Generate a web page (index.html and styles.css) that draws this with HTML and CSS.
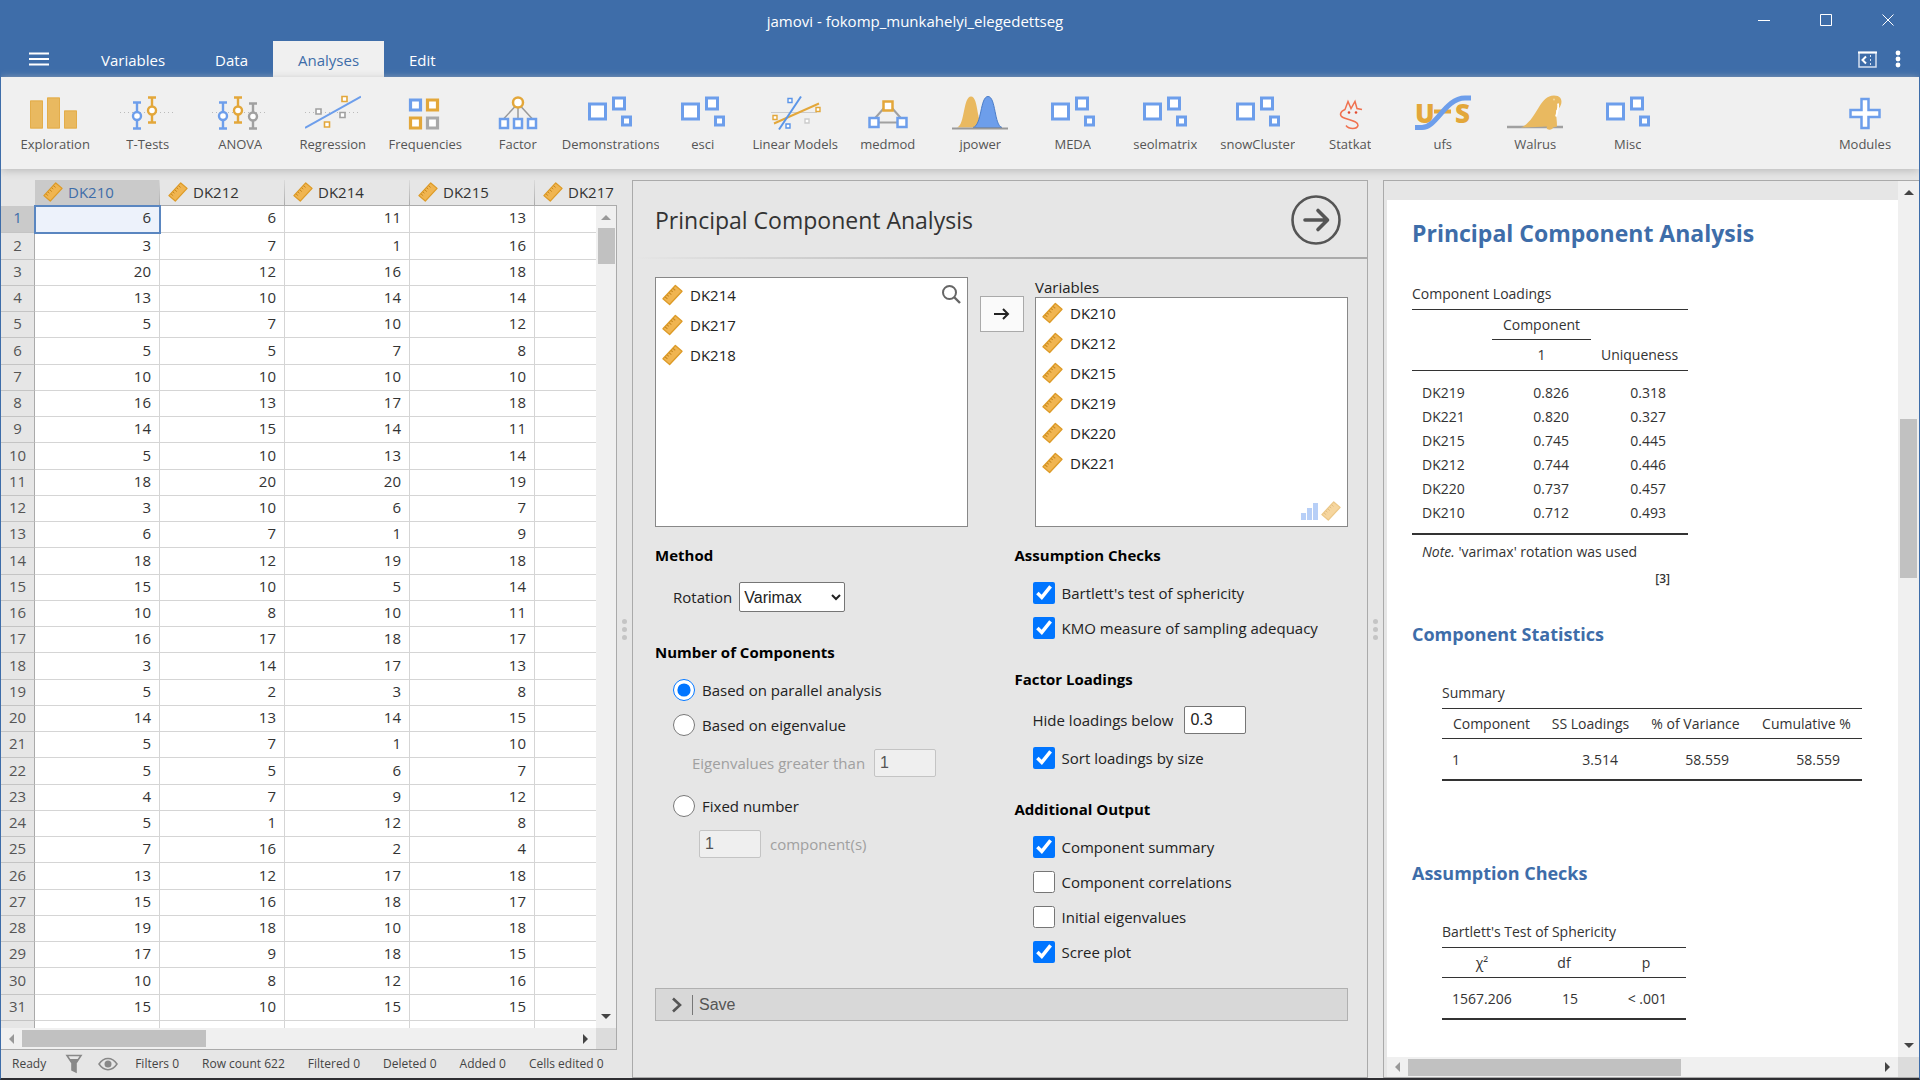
FILE: index.html
```html
<!DOCTYPE html>
<html lang="en">
<head>
<meta charset="utf-8">
<title>jamovi - fokomp_munkahelyi_elegedettseg</title>
<link rel="stylesheet" href="styles.css">
</head>
<body>
<svg class="sprite" aria-hidden="true">
  <symbol id="ruler" viewBox="0 0 22 22">
    <path d="M14 1l7 6-13 14-7-6z" fill="#f0b551" stroke="#dd9b27" stroke-width="1.4" stroke-linejoin="round"/>
    <path d="M11.5 4l2.4 2M9.5 6.3l1.8 1.5M7.4 8.6l2.4 2M5.3 10.9l1.8 1.5M3.3 13.1l2.4 2" stroke="#c98a22" stroke-width="1.1"/>
  </symbol>
  <symbol id="module" viewBox="0 0 56 40">
    <g fill="#fff" stroke="#6d9eeb" stroke-width="3"><path d="M7.5 13.500h16v15h-16zM31.500 7.500h11v11h-11zM40.500 26.500h8v8h-8z"/></g>
  </symbol>
</svg>

<div class="window">
  <header class="titlebar">
    <h1 class="title">jamovi - fokomp_munkahelyi_elegedettseg</h1>
    <div class="winctl">
      <button type="button" aria-label="Minimize"><svg width="14" height="14"><path d="M1 7.500h12" stroke="#fff"/></svg></button>
      <button type="button" aria-label="Maximize"><svg width="14" height="14"><path d="M1.500 1.500h11v11h-11z" stroke="#fff" fill="none"/></svg></button>
      <button type="button" aria-label="Close"><svg width="14" height="14"><path d="M1.500 1.500l11 11M12.500 1.500l-11 11" stroke="#fff"/></svg></button>
    </div>
  </header>

  <nav class="tabs">
    <button type="button" class="burger" aria-label="Menu"><svg width="20" height="14"><path d="M0 1.500h20M0 7h20M0 12.500h20" stroke="#fff" stroke-width="2.200"/></svg></button>
    <button type="button" class="tab">Variables</button>
    <button type="button" class="tab">Data</button>
    <button type="button" class="tab active">Analyses</button>
    <button type="button" class="tab">Edit</button>
    <span class="grow"></span>
    <button type="button" class="tool" aria-label="Toggle panel"><svg width="19" height="17"><path d="M1 1.500h17v14.500h-17z" fill="none" stroke="#d5e0f0" stroke-width="1.500"/><path d="M0 1.500h19" stroke="#fff" stroke-width="2"/><path d="M8 5.500L4.500 9 8 12.500" fill="none" stroke="#fff" stroke-width="2"/><path d="M12.500 4v11" stroke="#d5e0f0" stroke-dasharray="2 2"/></svg></button>
    <button type="button" class="tool" aria-label="More"><svg width="6" height="18" fill="#fff"><circle cx="3" cy="3" r="2.400"/><circle cx="3" cy="9" r="2.400"/><circle cx="3" cy="15" r="2.400"/></svg></button>
  </nav>

  <div class="ribbon">
    <div class="menus">
      <button type="button" class="menu"><svg viewBox="0 0 56 40"><path d="M3 10h13v28H3zM20 7h13v31H20zM37 20h13v18H37z" fill="#e9b960"/><path d="M3.500 10.500h12v27h-12zM20.500 7.500h12v30h-12zM37.500 20.500h12v17h-12z" fill="none" stroke="#e3ad4a"/></svg><span>Exploration</span></button>
      <button type="button" class="menu"><svg viewBox="0 0 56 40"><path d="M0 22h56" stroke="#bbb" stroke-dasharray="1 3"/><g fill="#fff" stroke-width="2.400"><path d="M17 12v26M13 12h8M13 38h8" stroke="#6d9eeb"/><circle cx="17" cy="25.500" r="4" stroke="#6d9eeb"/><path d="M32 7v25M28 7h8M28 32h8" stroke="#e3a73a"/><circle cx="32" cy="20" r="4" stroke="#e3a73a"/></g></svg><span>T-Tests</span></button>
      <button type="button" class="menu"><svg viewBox="0 0 56 40"><path d="M0 22h56" stroke="#bbb" stroke-dasharray="1 3"/><g fill="#fff" stroke-width="2.400"><path d="M11 12v26M7 12h8M7 38h8" stroke="#6d9eeb"/><circle cx="11" cy="25.500" r="4" stroke="#6d9eeb"/><path d="M26 7v25M22 7h8M22 32h8" stroke="#e3a73a"/><circle cx="26" cy="20" r="4" stroke="#e3a73a"/><path d="M41 13v25M37 13h8M37 38h8" stroke="#a0a0a0"/><circle cx="41" cy="26" r="4" stroke="#a0a0a0"/></g></svg><span>ANOVA</span></button>
      <button type="button" class="menu"><svg viewBox="0 0 56 40"><path d="M0 22h56" stroke="#bbb" stroke-dasharray="1 3"/><path d="M0 37.500L56 6" stroke="#6d9eeb" stroke-width="2"/><g fill="#fff" stroke-width="1.600"><path d="M37 6h5v5h-5zM19.500 31.500h5v5h-5z" stroke="#e3a73a"/><path d="M11 18.500h5v5h-5zM35 22h5v5h-5z" stroke="#a0a0a0"/></g></svg><span>Regression</span></button>
      <button type="button" class="menu"><svg viewBox="0 0 56 40"><g fill="#fff" stroke-width="3.200"><path d="M13.500 9.500h10v10h-10z" stroke="#6d9eeb"/><path d="M30.500 9.500h10v10h-10zM13.500 27.500h10v10h-10z" stroke="#e3a73a"/><path d="M30.500 27.500h10v10h-10z" stroke="#a9a9a9"/></g></svg><span>Frequencies</span></button>
      <button type="button" class="menu"><svg viewBox="0 0 56 40"><path d="M28 14v14M26 15L14 28M30 15l12 13" stroke="#999" stroke-width="1.500"/><g fill="#fff" stroke-width="2.500"><circle cx="28" cy="12" r="5" stroke="#e3a73a"/><path d="M10 28.500h8v9h-8zM24 28.500h8v9h-8zM38 28.500h8v9h-8z" stroke="#6d9eeb"/></g></svg><span>Factor</span></button>
      <button type="button" class="menu"><svg viewBox="0 0 56 40"><use href="#module"/></svg><span>Demonstrations</span></button>
      <button type="button" class="menu"><svg viewBox="0 0 56 40"><use href="#module"/></svg><span>esci</span></button>
      <button type="button" class="menu"><svg viewBox="0 0 56 40"><path d="M4 22h46" stroke="#ccc"/><path d="M7 33L52 13" stroke="#e3a73a" stroke-width="2"/><path d="M12 39L34 6" stroke="#5b95e8" stroke-width="2"/><g fill="#fff" stroke-width="1.400"><path d="M21 8h4v4h-4zM19 33.500h4v4h-4z" stroke="#5b95e8"/><path d="M6 25h4v4H6zM49 17h4v4h-4z" stroke="#e3a73a"/><path d="M38 28.500h4v4h-4z" stroke="#ccc"/></g></svg><span>Linear Models</span></button>
      <button type="button" class="menu"><svg viewBox="0 0 56 40"><path d="M28 13L13 30M28 13l15 17M14 32h28" stroke="#a0a0a0" stroke-width="2"/><g fill="#fff" stroke-width="2.500"><path d="M23.500 11h9v9h-9z" stroke="#e3a73a"/><path d="M9.500 27.500h9v9h-9zM37.500 27.500h9v9h-9z" stroke="#6d9eeb"/></g></svg><span>medmod</span></button>
      <button type="button" class="menu"><svg viewBox="0 0 56 40"><path d="M5 37c8-2 6-31 14-31s5 29 14 31z" fill="#e9b960"/><path d="M21 37c9-2 7-31 15-31s6 29 14 31z" fill="#6d9eeb" stroke="#4a7cc8"/><path d="M0 38h56" stroke="#999" stroke-width="2"/></svg><span>jpower</span></button>
      <button type="button" class="menu"><svg viewBox="0 0 56 40"><use href="#module"/></svg><span>MEDA</span></button>
      <button type="button" class="menu"><svg viewBox="0 0 56 40"><use href="#module"/></svg><span>seolmatrix</span></button>
      <button type="button" class="menu"><svg viewBox="0 0 56 40"><use href="#module"/></svg><span>snowCluster</span></button>
      <button type="button" class="menu"><svg viewBox="0 0 56 40"><path d="M40 19l-5-1-2-7-4 7-3-7-3 8c-5 2-6 6-2 8 6 3 15 3 15 8-1 4-9 4-12 0" fill="none" stroke="#f0714f" stroke-width="1.500"/><circle cx="27" cy="22" r="1.300" fill="#e34a30"/><circle cx="34" cy="22" r="1.300" fill="#e34a30"/></svg><span>Statkat</span></button>
      <button type="button" class="menu"><svg viewBox="0 0 56 40"><path d="M19 21h17" stroke="#e3a73a" stroke-width="4"/><text x="0" y="32" class="logo">U</text><text x="40" y="32" class="logo">S</text><path d="M0 37h7C22 37 30 7.500 50 7.500h6" fill="none" stroke="#6d9eeb" stroke-width="5"/></svg><span>ufs</span></button>
      <button type="button" class="menu"><svg viewBox="0 0 56 40"><path d="M0 36.500h57" stroke="#a0a0a0" stroke-width="2.500"/><path d="M14 37C30 30 32 5 47 5c8 0 8 6 7 9-2 5-4 5-5 6 0 6 1 10 1 16l-4 1c0 3-8 3-6-1z" fill="#e9b960"/><path d="M51 13c1 4-1 9-2 13" fill="none" stroke="#fff" stroke-width="1.800"/><circle cx="47" cy="9" r="1" fill="#f5d89c"/></svg><span>Walrus</span></button>
      <button type="button" class="menu"><svg viewBox="0 0 56 40"><use href="#module"/></svg><span>Misc</span></button>
    </div>
    <button type="button" class="menu modules"><svg viewBox="0 0 56 40"><path d="M24.500 8.500h7v11h11v7h-11v11h-7v-11h-11v-7h11z" fill="#fff" stroke="#6d9eeb" stroke-width="2.500"/></svg><span>Modules</span></button>
  </div>

  <main class="workspace">
    <section class="data">
      <div class="sheet">
        <div class="view">
          <table class="grid">
            <colgroup><col class="c-num"><col><col><col><col><col></colgroup>
            <thead><tr><th></th><th class="sel"><svg><use href="#ruler"/></svg>DK210</th><th><svg><use href="#ruler"/></svg>DK212</th><th><svg><use href="#ruler"/></svg>DK214</th><th><svg><use href="#ruler"/></svg>DK215</th><th><svg><use href="#ruler"/></svg>DK217</th></tr></thead>
            <tbody>
              <tr class="first"><th>1</th><td class="cursor">6</td><td>6</td><td>11</td><td>13</td><td></td></tr>
              <tr><th>2</th><td>3</td><td>7</td><td>1</td><td>16</td><td></td></tr>
              <tr><th>3</th><td>20</td><td>12</td><td>16</td><td>18</td><td></td></tr>
              <tr><th>4</th><td>13</td><td>10</td><td>14</td><td>14</td><td></td></tr>
              <tr><th>5</th><td>5</td><td>7</td><td>10</td><td>12</td><td></td></tr>
              <tr><th>6</th><td>5</td><td>5</td><td>7</td><td>8</td><td></td></tr>
              <tr><th>7</th><td>10</td><td>10</td><td>10</td><td>10</td><td></td></tr>
              <tr><th>8</th><td>16</td><td>13</td><td>17</td><td>18</td><td></td></tr>
              <tr><th>9</th><td>14</td><td>15</td><td>14</td><td>11</td><td></td></tr>
              <tr><th>10</th><td>5</td><td>10</td><td>13</td><td>14</td><td></td></tr>
              <tr><th>11</th><td>18</td><td>20</td><td>20</td><td>19</td><td></td></tr>
              <tr><th>12</th><td>3</td><td>10</td><td>6</td><td>7</td><td></td></tr>
              <tr><th>13</th><td>6</td><td>7</td><td>1</td><td>9</td><td></td></tr>
              <tr><th>14</th><td>18</td><td>12</td><td>19</td><td>18</td><td></td></tr>
              <tr><th>15</th><td>15</td><td>10</td><td>5</td><td>14</td><td></td></tr>
              <tr><th>16</th><td>10</td><td>8</td><td>10</td><td>11</td><td></td></tr>
              <tr><th>17</th><td>16</td><td>17</td><td>18</td><td>17</td><td></td></tr>
              <tr><th>18</th><td>3</td><td>14</td><td>17</td><td>13</td><td></td></tr>
              <tr><th>19</th><td>5</td><td>2</td><td>3</td><td>8</td><td></td></tr>
              <tr><th>20</th><td>14</td><td>13</td><td>14</td><td>15</td><td></td></tr>
              <tr><th>21</th><td>5</td><td>7</td><td>1</td><td>10</td><td></td></tr>
              <tr><th>22</th><td>5</td><td>5</td><td>6</td><td>7</td><td></td></tr>
              <tr><th>23</th><td>4</td><td>7</td><td>9</td><td>12</td><td></td></tr>
              <tr><th>24</th><td>5</td><td>1</td><td>12</td><td>8</td><td></td></tr>
              <tr><th>25</th><td>7</td><td>16</td><td>2</td><td>4</td><td></td></tr>
              <tr><th>26</th><td>13</td><td>12</td><td>17</td><td>18</td><td></td></tr>
              <tr><th>27</th><td>15</td><td>16</td><td>18</td><td>17</td><td></td></tr>
              <tr><th>28</th><td>19</td><td>18</td><td>10</td><td>18</td><td></td></tr>
              <tr><th>29</th><td>17</td><td>9</td><td>18</td><td>15</td><td></td></tr>
              <tr><th>30</th><td>10</td><td>8</td><td>12</td><td>16</td><td></td></tr>
              <tr><th>31</th><td>15</td><td>10</td><td>15</td><td>15</td><td></td></tr>
              <tr><th>32</th><td>10</td><td>10</td><td>10</td><td>20</td><td></td></tr>
            </tbody>
          </table>
        </div>
        <div class="vbar sheet-v"><i class="arrow up off"></i><i class="thumb"></i><i class="arrow down"></i></div>
        <div class="hbar sheet-h"><i class="arrow left off"></i><i class="thumb"></i><i class="arrow right"></i></div>
        <div class="corner"></div>
      </div>
      <footer class="status">
        <span>Ready</span>
        <svg class="funnel" width="18" height="20"><path d="M2 1.500h14L11 9v9l-4-2V9z" fill="none" stroke="#888" stroke-width="1.600"/><path d="M4 5h10l-3 4v9l-4-2V9z" fill="#888"/></svg>
        <svg class="eye" width="20" height="14"><path d="M1 7c5-7.500 13-7.500 18 0-5 7.500-13 7.500-18 0z" fill="none" stroke="#888" stroke-width="1.500"/><circle cx="10" cy="7" r="3.500" fill="#888"/></svg>
        <span>Filters 0</span><span>Row count 622</span><span>Filtered 0</span><span>Deleted 0</span><span>Added 0</span><span>Cells edited 0</span>
      </footer>
    </section>

    <div class="splitter"><i></i><i></i><i></i></div>

    <section class="options">
      <div class="opt-head">
        <h2>Principal Component Analysis</h2>
        <button type="button" class="go" aria-label="Close options"><svg width="50" height="50"><circle cx="25" cy="25" r="23.500" fill="none" stroke="#555" stroke-width="2.600"/><path d="M14 25h21M27 15.500l9.500 9.500-9.500 9.500" fill="none" stroke="#555" stroke-width="3.600" stroke-linecap="round" stroke-linejoin="round"/></svg></button>
      </div>
      <div class="rule"></div>
      <div class="opt-body">
        <div class="assign">
          <div class="listbox source">
            <ul>
              <li><svg><use href="#ruler"/></svg>DK214</li>
              <li><svg><use href="#ruler"/></svg>DK217</li>
              <li><svg><use href="#ruler"/></svg>DK218</li>
            </ul>
            <button type="button" class="search" aria-label="Search"><svg width="20" height="20"><circle cx="8.500" cy="8.500" r="6.500" fill="none" stroke="#666" stroke-width="2"/><path d="M13 13l6 6" stroke="#666" stroke-width="2.400"/></svg></button>
          </div>
          <button type="button" class="move" aria-label="Move to Variables"><svg width="16" height="14"><path d="M0 7h14M9 2l5 5-5 5" fill="none" stroke="#222" stroke-width="2"/></svg></button>
          <div class="target">
            <h3>Variables</h3>
            <div class="listbox">
              <ul>
                <li><svg><use href="#ruler"/></svg>DK210</li>
                <li><svg><use href="#ruler"/></svg>DK212</li>
                <li><svg><use href="#ruler"/></svg>DK215</li>
                <li><svg><use href="#ruler"/></svg>DK219</li>
                <li><svg><use href="#ruler"/></svg>DK220</li>
                <li><svg><use href="#ruler"/></svg>DK221</li>
              </ul>
              <div class="allowed"><svg viewBox="0 0 20 20"><path d="M1 12h5v7H1zM7 7h5v12H7zM13 2h5v17h-5z" fill="#b7cff7"/></svg><svg viewBox="0 0 22 22"><use href="#ruler"/></svg></div>
            </div>
          </div>
        </div>

        <div class="cols">
          <div class="col">
            <fieldset>
              <legend>Method</legend>
              <div class="row tall"><label for="rotation">Rotation</label><select id="rotation"><option>Varimax</option></select></div>
            </fieldset>
            <fieldset>
              <legend>Number of Components</legend>
              <label class="row"><input type="radio" name="nf" checked>Based on parallel analysis</label>
              <label class="row"><input type="radio" name="nf">Based on eigenvalue</label>
              <div class="row sub eigen"><label for="eigen">Eigenvalues greater than</label><input id="eigen" type="text" value="1" disabled></div>
              <label class="row"><input type="radio" name="nf">Fixed number</label>
              <div class="row sub fixed"><input id="ncomp" type="text" value="1" disabled><label for="ncomp">component(s)</label></div>
            </fieldset>
          </div>
          <div class="col">
            <fieldset>
              <legend>Assumption Checks</legend>
              <label class="row"><input type="checkbox" checked>Bartlett's test of sphericity</label>
              <label class="row"><input type="checkbox" checked>KMO measure of sampling adequacy</label>
            </fieldset>
            <fieldset>
              <legend>Factor Loadings</legend>
              <div class="row field"><label for="hide">Hide loadings below</label><input id="hide" type="text" value="0.3"></div>
              <label class="row"><input type="checkbox" checked>Sort loadings by size</label>
            </fieldset>
            <fieldset>
              <legend>Additional Output</legend>
              <label class="row"><input type="checkbox" checked>Component summary</label>
              <label class="row"><input type="checkbox">Component correlations</label>
              <label class="row"><input type="checkbox">Initial eigenvalues</label>
              <label class="row"><input type="checkbox" checked>Scree plot</label>
            </fieldset>
          </div>
        </div>

        <button type="button" class="collapse"><svg width="10" height="16"><path d="M1 1.500L8 8l-7 6.500" fill="none" stroke="#555" stroke-width="2.600"/></svg><span>Save</span></button>
      </div>
    </section>

    <div class="splitter"><i></i><i></i><i></i></div>

    <section class="results">
      <div class="page">
        <h2>Principal Component Analysis</h2>
        <table class="rt loadings">
          <caption>Component Loadings</caption>
          <colgroup><col class="w80"><col class="w99"><col class="w97"></colgroup>
          <thead>
            <tr><th></th><th class="span">Component</th><th></th></tr>
            <tr><th></th><th>1</th><th>Uniqueness</th></tr>
          </thead>
          <tbody>
            <tr><td>DK219</td><td>0.826</td><td>0.318</td></tr>
            <tr><td>DK221</td><td>0.820</td><td>0.327</td></tr>
            <tr><td>DK215</td><td>0.745</td><td>0.445</td></tr>
            <tr><td>DK212</td><td>0.744</td><td>0.446</td></tr>
            <tr><td>DK220</td><td>0.737</td><td>0.457</td></tr>
            <tr><td>DK210</td><td>0.712</td><td>0.493</td></tr>
          </tbody>
        </table>
        <p class="note"><em>Note.</em> 'varimax' rotation was used</p>
        <p class="ref">[3]</p>

        <h3>Component Statistics</h3>
        <table class="rt inset summary">
          <caption>Summary</caption>
          <colgroup><col class="w99"><col class="w99"><col class="w111"><col class="w111"></colgroup>
          <thead><tr><th>Component</th><th>SS Loadings</th><th>% of Variance</th><th>Cumulative %</th></tr></thead>
          <tbody><tr><td>1</td><td>3.514</td><td>58.559</td><td>58.559</td></tr></tbody>
        </table>

        <h3 class="second">Assumption Checks</h3>
        <table class="rt inset bartlett">
          <caption>Bartlett's Test of Sphericity</caption>
          <colgroup><col class="w80"><col class="w84"><col class="w80"></colgroup>
          <thead><tr><th>χ²</th><th>df</th><th>p</th></tr></thead>
          <tbody><tr><td>1567.206</td><td>15</td><td>&lt; .001</td></tr></tbody>
        </table>
      </div>
      <div class="vbar res-v"><i class="arrow up"></i><i class="thumb"></i><i class="arrow down"></i></div>
      <div class="hbar res-h"><i class="arrow left off"></i><i class="thumb"></i><i class="arrow right"></i></div>
      <div class="corner"></div>
    </section>
  </main>
</div>
</body>
</html>
```
FILE: styles.css
```css
* { box-sizing: border-box; }

body {
  margin: 0;
  font-family: "Open Sans", "Noto Sans", sans-serif;
  font-size: 15px;
  line-height: 22px;
  color: #333;
}

h1, h2, h3, p, ul, fieldset, legend { margin: 0; padding: 0; border: 0; }
ul { list-style: none; }
button { margin: 0; padding: 0; border: 0; background: none; font: inherit; color: inherit; }
svg { display: block; flex: none; }
i { display: block; }

.sprite { position: absolute; width: 0; height: 0; }
.grow { flex: 1; }

.window {
  display: flex;
  flex-direction: column;
  height: 100vh;
  background: #e6e6e6;
  border: 1px solid #3e6da9;
  border-top: 0;
  border-bottom: 2px solid #2e2e32;
  overflow: hidden;
}

/* title bar and tabs */
.titlebar { display: flex; height: 41px; padding-left: 96px; background: #3e6da9; color: #fff; flex: none; }
.title { flex: 1; font-size: 15px; font-weight: 400; line-height: 42px; text-align: center; }
.winctl { display: flex; }
.winctl button { display: grid; place-items: center; width: 62px; height: 40px; }

.tabs { display: flex; align-items: stretch; height: 36px; padding-right: 10px; background: #3e6da9; color: #fff; flex: none; }
.burger { display: grid; place-items: center; width: 75px; }
.tab { padding: 0 25px; font-size: 15px; line-height: 38px; }
.tab.active { background: #f0f0f0; color: #3e6da9; }
.tool { display: grid; place-items: center; padding: 0 10px; }
.tool + .tool { padding: 0 8px; }

/* ribbon */
.ribbon {
  display: flex;
  justify-content: space-between;
  height: 92px;
  padding: 11px 8px 0;
  background: #f0f0f0;
  box-shadow: 0 2px 8px #bbb;
  flex: none;
  z-index: 1;
}
.menus { display: flex; flex: 0 1 1665px; }
.menu { display: flex; flex: 1 1 0; flex-direction: column; align-items: center; min-width: 0; color: #555; font-size: 13px; line-height: 22px; }
.menu svg { width: 56px; height: 45px; }
.menu span { max-width: 97px; overflow: hidden; white-space: nowrap; }
.modules { flex: 0 0 92px; }
.logo { font: 800 26px "Open Sans", sans-serif; fill: #e3a73a; }

.workspace {
  display: grid;
  grid-template-columns: 616fr 15px 736fr 15px 536fr;
  flex: 1;
  min-height: 0;
  padding-top: 11px;
}

/* data sheet */
.data { display: flex; flex-direction: column; min-width: 0; min-height: 0; }
.sheet {
  display: grid;
  grid-template: 26px 1fr 21px / 1fr 21px;
  flex: 1;
  min-height: 0;
  border-bottom: 1px solid #aaa;
}
.view { grid-area: 1 / 1 / 3 / 3; overflow: hidden; }
.grid { width: 659px; table-layout: fixed; border-collapse: separate; border-spacing: 0; background: #fff; }
.grid .c-num { width: 34px; }
.grid th, .grid td { height: 26px; padding: 0 8px 0 0; border: 0 solid #d5d5d5; border-width: 0 1px 1px 0; font-weight: 400; text-align: right; line-height: 22px; vertical-align: top; }
.grid tbody tr:nth-child(4n + 2) > * { height: 27px; line-height: 24px; }
.grid .first > * { height: 27px; }
.grid tbody th { padding: 0; border-color: #c4c4c4 #aaa #c4c4c4 #aaa; background: #e6e6e6; color: #555; text-align: center; }
.grid thead th { height: 26px; padding: 0 0 0 33px; border-color: #aaa; border-image: linear-gradient(#ddd, #aaa) 1; background: #e6e6e6; color: #333; text-align: left; line-height: 24px; }
.grid thead th:first-child { border-image: none; border-color: transparent; }
.grid thead svg { float: left; width: 20px; height: 20px; margin: 2px 3px 0 -25px; }
.grid thead .sel, .grid .first th { background: #cacaca; color: #3e6da9; }
.grid .cursor { background: #edf2fb; outline: 2px solid #5a86c0; outline-offset: -1px; }

.status { display: flex; align-items: center; height: 28px; padding-left: 11px; gap: 23px; font-size: 12px; color: #444; flex: none; white-space: nowrap; }
.funnel { margin-left: -4px; }
.eye { margin: 0 -6px 0 -8px; }

/* scroll bars */
.vbar, .hbar { display: flex; align-items: center; background: #f0f0f0; z-index: 1; }
.vbar { flex-direction: column; border-right: 1px solid #aaa; }
.thumb { background: #c1c1c1; }
.vbar .thumb { width: 17px; }
.hbar .thumb { height: 17px; }
.arrow { border: 5px solid transparent; }
.arrow.up { border-top: 0; border-bottom-color: #444; margin: 9px 0 8px; }
.arrow.down { border-bottom: 0; border-top-color: #444; margin: auto 0 9px; }
.arrow.left { border-left: 0; border-right-color: #444; margin: 0 8px; }
.arrow.right { border-right: 0; border-left-color: #444; margin: 0 8px 0 auto; }
.arrow.up.off { border-bottom-color: #999; }
.arrow.left.off { border-right-color: #999; }
.corner { background: #dcdcdc; }
.sheet-v { grid-area: 2 / 2; }
.sheet-v .thumb { height: 36px; }
.sheet-h { grid-area: 3 / 1; }
.sheet-h .thumb { width: 184px; }
.sheet > .corner { border-right: 1px solid #aaa; }

.splitter { display: flex; flex-direction: column; align-items: center; justify-content: center; gap: 3px; }
.splitter i { width: 5px; height: 5px; border-radius: 50%; background: #c4c4c4; }

/* analysis options */
.options { border: 1px solid #aaa; overflow: hidden; color: #222; }
.opt-head { display: flex; align-items: center; justify-content: space-between; height: 76px; padding: 2px 26px 0 22px; }
.opt-head h2 { font-size: 23px; font-weight: 400; line-height: 32px; color: #333; }
.rule { height: 2px; background: linear-gradient(90deg, transparent, #aaa 60%); }
.opt-body { padding: 18px 19px 0 22px; }
.assign { display: grid; grid-template-columns: 1fr 67px 1fr; justify-items: center; height: 250px; }
.listbox { display: flex; justify-content: space-between; width: 100%; background: #fff; border: 1px solid #888; }
.listbox li { display: flex; align-items: center; gap: 7px; height: 30px; padding-left: 6px; }
.listbox li svg { width: 21px; height: 22px; }
.source { padding-top: 2px; }
.search { align-self: flex-start; padding: 4px 6px; }
.move { display: grid; place-items: center; width: 44px; height: 36px; margin-top: 19px; border: 1px solid #aaa; background: #fafafa; }
.target { display: flex; flex-direction: column; width: 100%; }
.target h3 { font-size: 15px; font-weight: 400; line-height: 20px; }
.target .listbox { flex: 1; }
.allowed { display: flex; align-self: flex-end; gap: 1px; padding: 4px 6px 4px 0; }
.allowed svg { width: 20px; height: 22px; }
.allowed svg:last-child { opacity: .55; }

.cols { display: grid; grid-template-columns: 359fr 333fr; padding-top: 16px; }
.col { display: flex; flex-direction: column; gap: 28px; }
fieldset { display: flex; flex-direction: column; gap: 13px; min-width: 0; }
legend { margin-bottom: 15px; font-weight: 700; line-height: 24px; color: #000; }
.row { display: flex; align-items: center; gap: 7px; height: 22px; padding-left: 18px; white-space: nowrap; }
.row.tall { height: 30px; }
.row.field { height: 28px; gap: 11px; }
.row input[type=checkbox], .row input[type=radio] { width: 22px; height: 22px; margin: 0; accent-color: #0075ff; }
select, .row input[type=text] { font: 16px "Liberation Sans", sans-serif; border: 1px solid #767676; border-radius: 2px; background: #fff; color: #222; }
select { width: 106px; height: 30px; padding: 0; }
.row input[type=text] { width: 62px; height: 28px; padding: 0 5px; }
.row input[type=text]:disabled { border-color: #c4c4c4; background: #efefef; color: #555; }
.sub { height: 27px; gap: 9px; color: #a0a0a0; }
.eigen { padding-left: 37px; margin-bottom: 6px; }
.fixed { padding-left: 44px; }

.collapse { display: flex; align-items: center; gap: 10px; width: 100%; height: 33px; margin-top: 25px; padding-left: 16px; border: 1px solid #b0b0b0; background: #d8d8d8; font: 16px/20px "Liberation Sans", sans-serif; color: #555; }
.collapse span { padding-left: 6px; border-left: 1px solid #777; }

/* results */
.results { display: grid; grid-template: 1fr 20px / 1fr 21px; min-width: 0; min-height: 0; padding-left: 3px; border: 1px solid #aaa; border-right: 0; }
.page { overflow: hidden; min-height: 0; margin-top: 19px; padding: 16px 0 0 25px; background: #fff; }
.page h2 { font-size: 23px; line-height: 34px; color: #3e6da9; }
.page h3 { margin-top: 30px; font-size: 18px; line-height: 28px; color: #3e6da9; }
.page h3.second { margin-top: 78px; }
.res-v .thumb { height: 159px; margin-top: 216px; }
.res-h .thumb { width: 273px; }
.res-v { border-right: 0; }

.rt { margin-top: 34px; table-layout: fixed; border-collapse: separate; border-spacing: 0; border-bottom: 2px solid #333; font-size: 14px; white-space: nowrap; }
.rt.inset { margin: 35px 0 0 30px; }
.rt caption { text-align: left; line-height: 20px; padding-bottom: 5px; }
.rt th, .rt td { height: 24px; padding: 0; font-weight: 400; text-align: right; }
.rt th { height: 31px; text-align: center; }
.rt thead tr:first-child th { border-top: 1px solid #333; }
.rt thead tr:last-child th { border-bottom: 1px solid #333; }
.rt thead .span { border-bottom: 1px solid #333; }
.rt tbody tr:first-child td { height: 34px; padding-top: 10px; }
.rt tbody tr:last-child td { height: 40px; padding-bottom: 8px; }
.rt td:first-child { padding-left: 10px; text-align: left; }
.loadings { width: 276px; }
.loadings tbody tr:last-child td { height: 32px; }
.loadings td + td { padding-right: 22px; }
.summary { width: 420px; }
.summary td + td { padding-right: 22px; }
.bartlett { width: 244px; }
.bartlett td:nth-child(2) { padding-right: 28px; }
.bartlett td:nth-child(3) { padding-right: 19px; }
.w80 { width: 80px; }
.w84 { width: 84px; }
.w97 { width: 97px; }
.w99 { width: 99px; }
.w111 { width: 111px; }
.note { margin-top: 6px; padding-left: 10px; font-size: 14px; }
.ref { width: 276px; margin-top: 5px; padding-right: 18px; font-size: 12px; font-weight: 600; text-align: right; }
```
